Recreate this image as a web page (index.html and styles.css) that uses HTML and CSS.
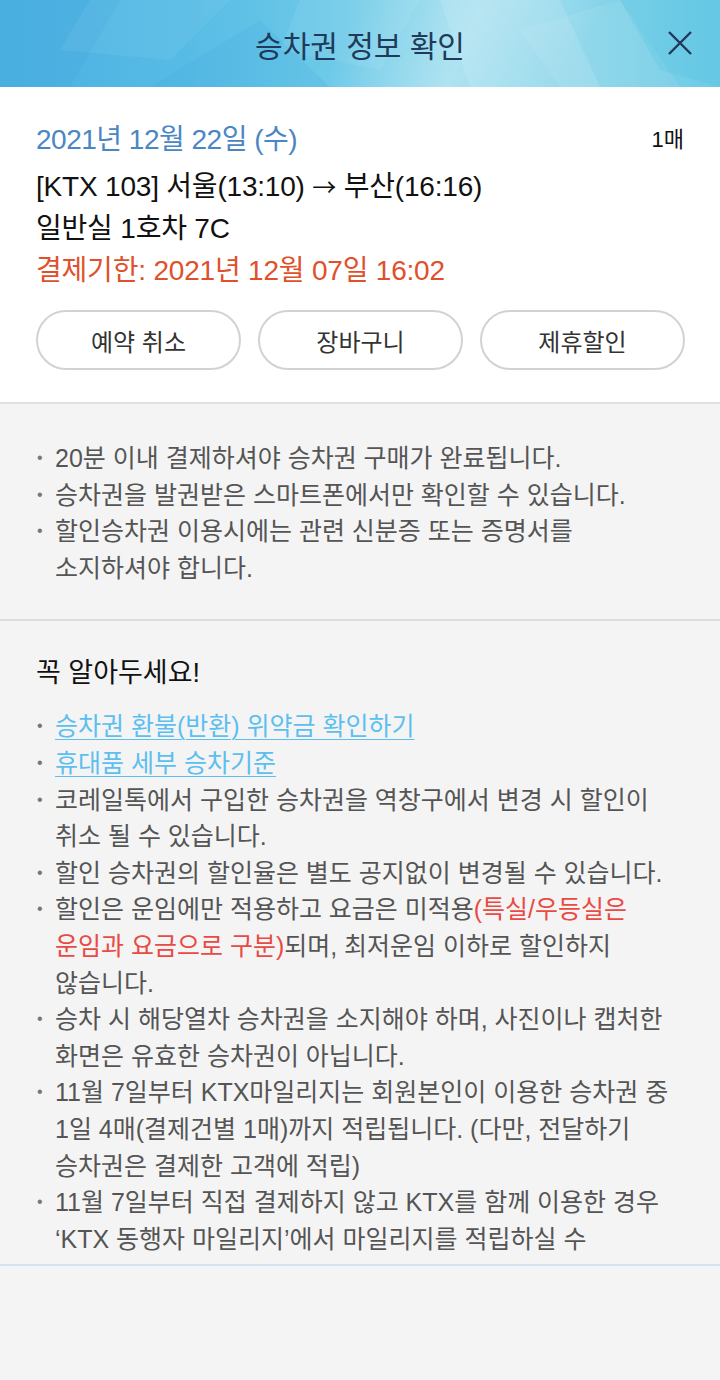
FILE: index.html
```html
<!DOCTYPE html>
<html lang="ko">
<head>
<meta charset="utf-8">
<title>승차권 정보 확인</title>
<link rel="stylesheet" href="styles.css">
</head>
<body>
<div class="page">
  <header class="topbar">
    <svg class="topbar-bg" viewBox="0 0 720 87" preserveAspectRatio="none" aria-hidden="true">
      <polygon points="0,0 120,0 70,87 0,87" fill="#3fa6dc" opacity="0.25"/>
      <polygon points="90,0 230,0 170,60 60,50" fill="#ffffff" opacity="0.06"/>
      <polygon points="150,87 260,20 330,87" fill="#2f9bd6" opacity="0.12"/>
      <polygon points="300,0 420,0 380,70 280,50" fill="#ffffff" opacity="0.07"/>
      <polygon points="440,0 560,0 600,87 470,87" fill="#ffffff" opacity="0.12"/>
      <polygon points="520,30 620,0 680,87 560,87" fill="#ffffff" opacity="0.08"/>
      <polygon points="620,0 720,0 720,87 660,70" fill="#4cc0e0" opacity="0.22"/>
    </svg>
    <h1 class="topbar-title">승차권 정보 확인</h1>
    <button class="close-btn" aria-label="닫기">
      <svg width="26" height="26" viewBox="0 0 26 26"><path d="M2 2 L24 24 M24 2 L2 24" stroke="#1f3a5a" stroke-width="2.4" fill="none"/></svg>
    </button>
  </header>

  <section class="ticket">
    <div class="ticket-row">
      <span class="ticket-date">2021년 12월 22일 (수)</span>
      <span class="ticket-count">1매</span>
    </div>
    <p class="ticket-line">[KTX 103] 서울(13:10) <span class="arrow">→</span> 부산(16:16)</p>
    <p class="ticket-line">일반실 1호차 7C</p>
    <p class="ticket-line deadline">결제기한: 2021년 12월 07일 16:02</p>
    <div class="ticket-actions">
      <button class="pill">예약 취소</button>
      <button class="pill">장바구니</button>
      <button class="pill">제휴할인</button>
    </div>
  </section>

  <section class="notes">
    <ul class="bullets">
      <li>20분 이내 결제하셔야 승차권 구매가 완료됩니다.</li>
      <li>승차권을 발권받은 스마트폰에서만 확인할 수 있습니다.</li>
      <li>할인승차권 이용시에는 관련 신분증 또는 증명서를<br>소지하셔야 합니다.</li>
    </ul>
  </section>

  <section class="notes notes-must">
    <h2 class="notes-title">꼭 알아두세요!</h2>
    <ul class="bullets">
      <li><a class="link" href="#">승차권 환불(반환) 위약금 확인하기</a></li>
      <li><a class="link" href="#">휴대품 세부 승차기준</a></li>
      <li>코레일톡에서 구입한 승차권을 역창구에서 변경 시 할인이<br>취소 될 수 있습니다.</li>
      <li>할인 승차권의 할인율은 별도 공지없이 변경될 수 있습니다.</li>
      <li><span>할인은 운임에만 적용하고 요금은 미적용<em class="warn">(특실/우등실은<br>운임과 요금으로 구분)</em>되며, 최저운임 이하로 할인하지<br>않습니다.</span></li>
      <li>승차 시 해당열차 승차권을 소지해야 하며, 사진이나 캡처한<br>화면은 유효한 승차권이 아닙니다.</li>
      <li>11월 7일부터 KTX마일리지는 회원본인이 이용한 승차권 중<br>1일 4매(결제건별 1매)까지 적립됩니다. (다만, 전달하기<br>승차권은 결제한 고객에 적립)</li>
      <li>11월 7일부터 직접 결제하지 않고 KTX를 함께 이용한 경우<br>‘KTX 동행자 마일리지’에서 마일리지를 적립하실 수</li>
    </ul>
  </section>
</div>
</body>
</html>
```

FILE: styles.css
```css
* { box-sizing: border-box; }
html, body { margin: 0; padding: 0; }
body {
  width: 720px;
  height: 1380px;
  background: #f4f4f4;
  font-family: "Liberation Sans", "Noto Sans CJK KR", sans-serif;
  color: #111;
  overflow: hidden;
}
.page { width: 720px; }

.topbar {
  position: relative;
  height: 87px;
  display: flex;
  align-items: center;
  justify-content: center;
  overflow: hidden;
  background:
    linear-gradient(115deg, rgba(255,255,255,0) 48%, rgba(255,255,255,0.28) 64%, rgba(255,255,255,0) 80%),
    linear-gradient(90deg, #4cb0e2 0%, #56bbe5 25%, #6cc9e8 45%, #90d8ec 62%, #8ad5ea 80%, #6ccbe6 100%);
}
.topbar-bg { position: absolute; inset: 0; width: 100%; height: 100%; }
.topbar-title {
  position: relative;
  margin: 0;
  font-size: 30px;
  font-weight: normal;
  color: #1f3a5a;
  letter-spacing: 0;
}
.close-btn {
  position: absolute;
  right: 27px;
  top: 30px;
  width: 26px;
  height: 26px;
  padding: 0;
  border: 0;
  background: none;
  display: flex;
}

.ticket {
  background: #fff;
  padding: 29px 35px 32px 36px;
  border-bottom: 2px solid #e1e1e1;
}
.ticket-row {
  display: flex;
  justify-content: space-between;
  align-items: center;
  height: 42px;
  margin-bottom: 7px;
}
.ticket-date { font-size: 28px; color: #4b86c4; letter-spacing: -0.5px; }
.ticket-count { font-size: 22px; color: #111; padding-right: 1px; }
.ticket-line {
  margin: 0;
  font-size: 28px;
  line-height: 42px;
  color: #111;
  letter-spacing: -0.2px;
}
.arrow { font-family: "Noto Sans CJK KR", sans-serif; font-size: 24px; }
.deadline { color: #e0502b; }
.ticket-actions {
  display: flex;
  gap: 17px;
  margin-top: 18px;
}
.pill {
  flex: 1;
  height: 60px;
  border: 2px solid #d2d2d2;
  border-radius: 30px;
  background: #fff;
  font-family: inherit;
  font-size: 24px;
  color: #333;
  letter-spacing: 0;
}

.notes {
  padding: 36px 10px 33px 36px;
  border-bottom: 2px solid #dcdcdc;
}
.notes-must {
  padding-top: 34px;
  padding-bottom: 7px;
  border-bottom: 2px solid #d3e3f0;
}
.notes-title {
  margin: 0 0 17px;
  font-size: 27px;
  font-weight: normal;
  line-height: 36px;
  color: #111;
  letter-spacing: 0;
}
.bullets {
  list-style: none;
  margin: 0;
  padding: 0;
}
.bullets li {
  display: grid;
  grid-template-columns: 19px 1fr;
  font-size: 25px;
  line-height: 36.6px;
  color: #555;
  letter-spacing: 0;
  white-space: nowrap;
}
.bullets li::before {
  content: "•";
  font-size: 16px;
  color: #777;
  padding-left: 1px;
}
.link {
  color: #5cbff0;
  text-decoration: underline;
  text-underline-offset: 4px;
  text-decoration-thickness: 1px;
}
.warn { font-style: normal; color: #ea4a44; }
```
